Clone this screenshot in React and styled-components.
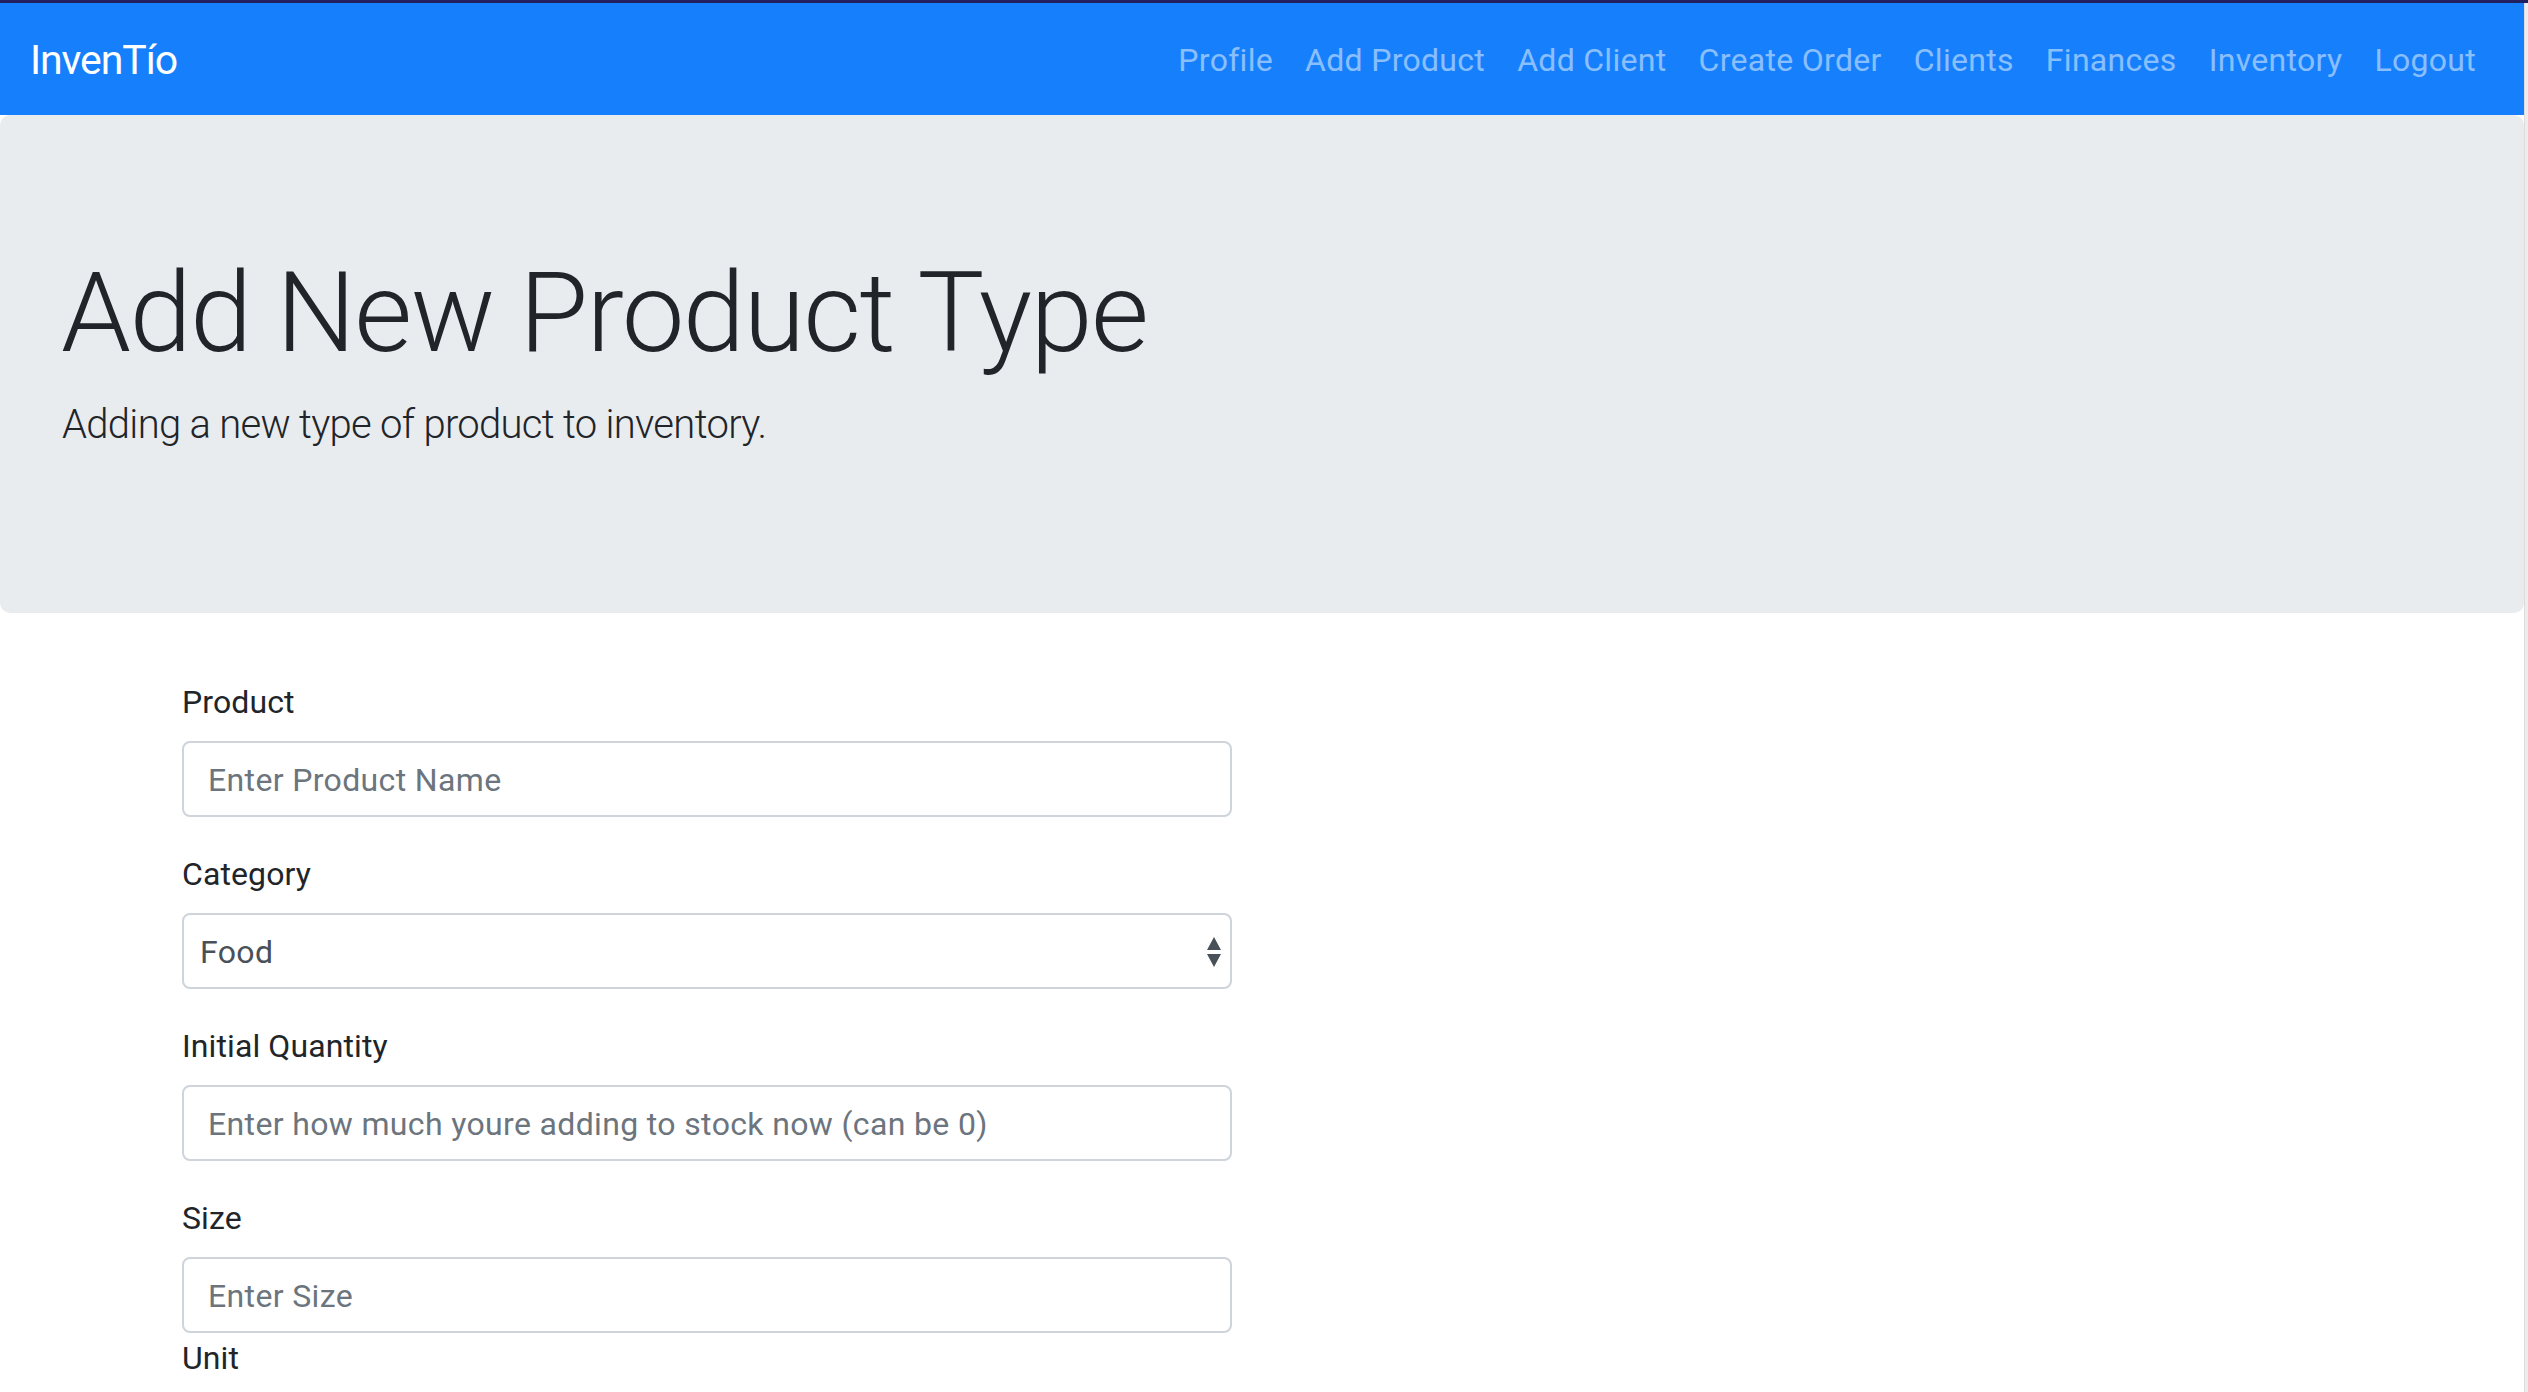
import React from 'react';
import styled, { createGlobalStyle } from 'styled-components';

const GlobalStyle = createGlobalStyle`
  html, body {
    margin: 0;
    padding: 0;
    overflow: hidden;
    background: #fff;
  }
  body {
    font-family: Roboto, "Helvetica Neue", Arial, sans-serif;
    color: #212529;
  }
  * {
    box-sizing: border-box;
  }
`;

const TopEdge = styled.div`
  height: 3px;
  background: #221f5f;
`;

const Shell = styled.div`
  display: flex;
  align-items: stretch;
`;

const Main = styled.main`
  flex: 1;
  min-width: 0;
`;

const ScrollStrip = styled.div`
  width: 4px;
  flex-shrink: 0;
  background: #ededed;
  border-left: 1px solid #dcdcdc;
`;

const Navbar = styled.nav`
  display: flex;
  justify-content: space-between;
  align-items: center;
  padding: 16px 32px;
  background: #167ffc;
`;

const Brand = styled.a`
  margin-left: -2px;
  font-size: 41px;
  line-height: 60px;
  padding: 11px 0 9px;
  letter-spacing: -1.1px;
  color: #fff;
  text-decoration: none;
`;

const NavList = styled.div`
  display: flex;
`;

const NavLink = styled.a`
  padding: 17px 16px 15px;
  font-size: 32px;
  line-height: 48px;
  letter-spacing: 0.3px;
  color: rgba(255, 255, 255, 0.5);
  text-decoration: none;
`;

const Jumbotron = styled.header`
  background: #e9ecef;
  padding: 128px 64px;
  border-radius: 10px;
  margin-bottom: 64px;
`;

const Title = styled.h1`
  margin: 0 0 13px -3px;
  padding-top: 3px;
  font-size: 112px;
  font-weight: 300;
  line-height: 1.2;
  letter-spacing: -1.6px;
`;

const Lead = styled.p`
  margin: 0 0 30px -2px;
  padding-top: 2px;
  font-size: 40px;
  font-weight: 300;
  line-height: 1.5;
  letter-spacing: -0.7px;
`;

const Form = styled.form`
  width: 1050px;
  margin-left: 182px;
`;

const Group = styled.div`
  margin-bottom: ${(p) => (p.$tight ? '0' : '32px')};
`;

const Label = styled.label`
  display: block;
  margin-bottom: 16px;
  padding-top: 1px;
  height: 48px;
  font-size: 32px;
  line-height: 48px;
  letter-spacing: 0.1px;
  color: #212529;
`;

const Input = styled.input`
  display: block;
  width: 100%;
  height: 76px;
  padding: 13px 24px 11px;
  font-family: inherit;
  font-size: 32px;
  letter-spacing: 0.35px;
  color: #495057;
  background: #fff;
  border: 2px solid #ced4da;
  border-radius: 8px;
  outline: none;

  &::placeholder {
    color: #6c757d;
  }
`;

const SelectWrap = styled.div`
  position: relative;
`;

const Select = styled.select`
  display: block;
  width: 100%;
  height: 76px;
  padding: 2px 48px 0 16px;
  font-family: inherit;
  font-size: 32px;
  letter-spacing: 0.35px;
  color: #495057;
  background: #fff;
  border: 2px solid #ced4da;
  border-radius: 8px;
  appearance: none;
  outline: none;
`;

const Arrows = styled.svg`
  position: absolute;
  right: 10px;
  top: 24px;
  pointer-events: none;
`;

export default function App() {
  const links = ['Profile', 'Add Product', 'Add Client', 'Create Order', 'Clients', 'Finances', 'Inventory', 'Logout'];

  return (
    <>
      <GlobalStyle />
      <TopEdge />
      <Shell>
        <Main>
          <Navbar>
            <Brand href="#">InvenTío</Brand>
            <NavList>
              {links.map((l) => (
                <NavLink key={l} href="#">{l}</NavLink>
              ))}
            </NavList>
          </Navbar>
          <Jumbotron>
            <Title>Add New Product Type</Title>
            <Lead>Adding a new type of product to inventory.</Lead>
          </Jumbotron>
          <Form onSubmit={(e) => e.preventDefault()}>
            <Group>
              <Label htmlFor="product">Product</Label>
              <Input id="product" type="text" placeholder="Enter Product Name" />
            </Group>
            <Group>
              <Label htmlFor="category">Category</Label>
              <SelectWrap>
                <Select id="category" defaultValue="Food">
                  <option>Food</option>
                  <option>Drink</option>
                  <option>Other</option>
                </Select>
                <Arrows width="16" height="30" viewBox="0 0 16 30">
                  <path d="M8 0 L15 13 L1 13 Z" fill="#495057" />
                  <path d="M1 17 L15 17 L8 30 Z" fill="#495057" />
                </Arrows>
              </SelectWrap>
            </Group>
            <Group>
              <Label htmlFor="qty">Initial Quantity</Label>
              <Input id="qty" type="text" placeholder="Enter how much youre adding to stock now (can be 0)" />
            </Group>
            <Group $tight>
              <Label htmlFor="size">Size</Label>
              <Input id="size" type="text" placeholder="Enter Size" />
            </Group>
            <Group>
              <Label htmlFor="unit">Unit</Label>
              <Input id="unit" type="text" placeholder="Enter Unit" />
            </Group>
          </Form>
        </Main>
        <ScrollStrip />
      </Shell>
    </>
  );
}
